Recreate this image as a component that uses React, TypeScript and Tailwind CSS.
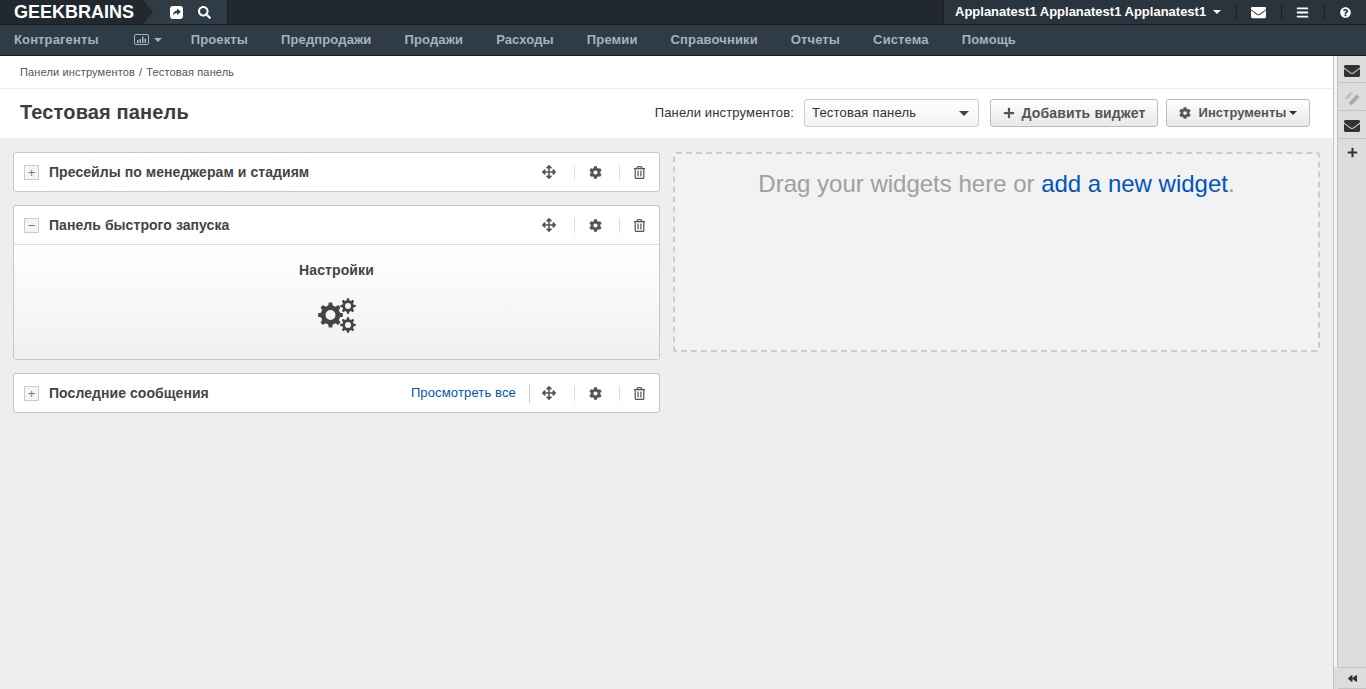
import React from 'react';
import {
  FaArrowsAlt,
  FaBackward,
  FaBars,
  FaCog,
  FaEnvelope,
  FaPlus,
  FaQuestionCircle,
  FaRegTrashAlt,
  FaSearch,
} from 'react-icons/fa';

const navItems = ['Проекты', 'Предпродажи', 'Продажи', 'Расходы', 'Премии', 'Справочники', 'Отчеты', 'Система', 'Помощь'];

// toothed wheel with a hole, used for the "Настройки" icon
const gearPath = (cx: number, cy: number, outer: number, inner: number, hole: number, teeth: number) => {
  const step = (Math.PI * 2) / teeth;
  const pt = (r: number, a: number) => `${(cx + r * Math.cos(a)).toFixed(2)} ${(cy + r * Math.sin(a)).toFixed(2)}`;
  let d = '';
  for (let i = 0; i < teeth; i++) {
    const a = i * step;
    d += `${i === 0 ? 'M' : 'L'}${pt(inner, a - step * 0.3)} L${pt(outer, a - step * 0.17)} L${pt(outer, a + step * 0.17)} L${pt(inner, a + step * 0.3)} `;
  }
  d += `Z M${cx - hole} ${cy} a${hole} ${hole} 0 1 0 ${hole * 2} 0 a${hole} ${hole} 0 1 0 ${-hole * 2} 0 Z`;
  return d;
};

const GearsIcon = () => (
  <svg width="38" height="35" viewBox="0 0 38 35" fill="#444" fillRule="evenodd">
    <path d={gearPath(12.5, 17, 12.5, 9.8, 5, 8)} />
    <path d={gearPath(30, 8, 7.8, 5.8, 3, 8)} />
    <path d={gearPath(30, 27, 7.8, 5.8, 3, 8)} />
  </svg>
);

const Caret: React.FC<{ className?: string }> = ({ className }) => (
  <span className={`inline-block w-0 h-0 border-x-[4px] border-x-transparent border-t-[4px] ${className ?? ''}`} />
);

const WidgetHeader: React.FC<{ title: string; open?: boolean; link?: boolean }> = ({ title, open, link }) => (
  <div className="h-[38px] flex items-center pl-[10px] pr-[13px]">
    <span className="w-[15px] h-[15px] border border-[#ccc] bg-[#f5f5f5] flex items-center justify-center text-[#777] text-[13px] leading-none">
      {open ? '−' : '+'}
    </span>
    <span className="ml-[10px] text-[14px] font-bold text-[#444] tracking-[0.06px]">{title}</span>
    <div className="ml-auto flex items-center text-[#555]">
      {link && (
        <>
          <span className="text-[13px] text-[#0055bb] mr-[13px] tracking-[0.14px]">Просмотреть все</span>
          <span className="w-px h-[19px] bg-[#ccc] mr-[12px]" />
        </>
      )}
      <FaArrowsAlt size={14} />
      <span className="w-px h-[15px] bg-[#ddd] ml-[18px] mr-[14px]" />
      <FaCog size={13} />
      <span className="w-px h-[15px] bg-[#ddd] ml-[17px] mr-[13px]" />
      <FaRegTrashAlt size={13} />
    </div>
  </div>
);

const SideItem: React.FC<{ children: React.ReactNode; className?: string }> = ({ children, className }) => (
  <div className={`flex items-center justify-center border-b border-[#c4c4c4] text-[#333] ${className ?? ''}`}>{children}</div>
);

export default function App() {
  return (
    <div className="h-[689px] w-[1366px] overflow-hidden flex flex-col bg-[#eee] font-['Liberation_Sans',Arial,sans-serif]">
      {/* top bar */}
      <div className="h-[25px] shrink-0 flex bg-[#22282f] border-b border-[#15191d]">
        <div className="relative w-[143px] flex items-center pl-[14px] text-white font-bold text-[18px]">
          GEEKBRAINS
          <span className="absolute left-full top-0 w-0 h-0 border-y-[12px] border-y-transparent border-l-[10px] border-l-[#22282f] z-10" />
        </div>
        <div className="w-[85px] bg-[#2f3b45] border-r border-[#1b2026] flex items-center text-white pl-[27px] gap-[15px]">
          <svg width="13" height="13" viewBox="0 0 13 13">
            <rect x="0" y="0" width="13" height="13" rx="3" fill="#fff" />
            <path d="M7 2.5 L11 5.8 L7 9 V7 C5 7 3.8 7.8 3 10 C2.8 6.5 4.5 4.6 7 4.5 Z" fill="#2f3b45" />
          </svg>
          <FaSearch size={13} />
        </div>
        <div className="ml-auto w-[423px] flex items-center bg-[#2a343d] border-l border-[#1b2026] text-white pl-[11px]">
          <span className="text-[13px] font-bold whitespace-nowrap">Applanatest1 Applanatest1 Applanatest1</span>
          <Caret className="border-t-white ml-[7px]" />
          <span className="w-px h-[16px] bg-[#1b2026] ml-[15px]" />
          <span className="w-[44px] pr-[2px] flex justify-center"><FaEnvelope size={15} /></span>
          <span className="w-px h-[16px] bg-[#1b2026]" />
          <span className="w-[42px] pr-px flex justify-center"><FaBars size={13} /></span>
          <span className="w-px h-[16px] bg-[#1b2026]" />
          <span className="w-[41px] flex justify-center"><FaQuestionCircle size={11} /></span>
        </div>
      </div>

      {/* nav */}
      <div className="h-[31px] shrink-0 flex items-center pl-[14px] pb-px bg-[#2f3b45] border-b border-[#15191d] text-[#a3b4bf] text-[13px] font-bold tracking-[0.13px]">
        <span>Контрагенты</span>
        <span className="flex items-center ml-[35px] mr-[29px]">
          <svg width="15" height="11" viewBox="0 0 15 11" fill="none">
            <rect x="0.5" y="0.5" width="14" height="10" rx="1.5" stroke="#a3b4bf" />
            <path d="M3 6h1.5v3H3zM5.5 5H7v4H5.5zM8 2.5h1.5V9H8zM10.5 4.5H12V9h-1.5z" fill="#a3b4bf" />
          </svg>
          <Caret className="border-t-[#a3b4bf] ml-[5px]" />
        </span>
        <div className="flex gap-[33px]">
          {navItems.map((item) => (
            <span key={item}>{item}</span>
          ))}
        </div>
      </div>

      <div className="flex-1 flex min-h-0">
        <div className="flex-1 flex flex-col min-w-0">
          {/* breadcrumb */}
          <div className="h-[33px] shrink-0 bg-white border-b border-[#eee] pl-[20px] flex items-center text-[11px] text-[#555] tracking-[0.15px]">
            Панели инструментов
            <span className="ml-[4px] mr-[4px]">/</span>
            Тестовая панель
          </div>
          {/* title */}
          <div className="h-[49px] shrink-0 bg-white flex items-center pl-[20px] pr-[23px]">
            <h1 className="text-[20px] font-bold text-[#3d3d3d] tracking-[0.14px] mb-[3px]">Тестовая панель</h1>
            <span className="ml-auto text-[13px] text-[#333] tracking-[0.15px] mb-px">Панели инструментов:</span>
            <div className="ml-[10px] w-[175px] h-[28px] mb-px border border-[#ccc] rounded-[3px] bg-gradient-to-b from-white to-[#f3f3f3] flex items-center pl-[7px] pr-[9px] text-[13px] text-[#333] tracking-[0.2px]">
              Тестовая панель
              <Caret className="ml-auto border-x-[5px] border-t-[5px] border-t-[#444]" />
            </div>
            <button className="ml-[11px] w-[168px] h-[28px] mb-px border border-[#bbb] rounded-[3px] bg-gradient-to-b from-white to-[#e8e8e8] flex items-center justify-center gap-[7px] text-[14px] font-bold text-[#555] tracking-[0.13px]">
              <FaPlus size={12} />
              Добавить виджет
            </button>
            <button className="ml-[8px] w-[144px] h-[28px] mb-px border border-[#bbb] rounded-[3px] bg-gradient-to-b from-white to-[#e8e8e8] flex items-center justify-center text-[13px] font-bold text-[#555]">
              <FaCog size={12} className="mr-[8px]" />
              Инструменты
              <Caret className="ml-[3px] border-t-[#333]" />
            </button>
          </div>

          {/* widgets */}
          <div className="flex-1 flex gap-[13px] pl-[13px] pr-[13px] pt-[14px]">
            <div className="w-[647px] flex flex-col gap-[13px]">
              <div className="bg-white border border-[#c6c6c6] rounded-[3px]">
                <WidgetHeader title="Пресейлы по менеджерам и стадиям" />
              </div>
              <div className="bg-white border border-[#c6c6c6] rounded-[3px]">
                <WidgetHeader title="Панель быстрого запуска" open />
                <div className="h-[115px] border-t border-[#ddd] bg-gradient-to-b from-white to-[#f0f0f0] flex flex-col items-center pt-[17px] text-[#444]">
                  <span className="text-[14px] font-bold leading-4 tracking-[0.1px]">Настройки</span>
                  <div className="mt-[20px]"><GearsIcon /></div>
                </div>
              </div>
              <div className="bg-white border border-[#c6c6c6] rounded-[3px]">
                <WidgetHeader title="Последние сообщения" link />
              </div>
            </div>
            <div className="flex-1 h-[200px] border-2 border-dashed border-[#ccc] rounded-[3px] bg-[#f2f2f2] pt-[14px] text-center text-[24px] leading-[32px] text-[#a0a0a0]">
              Drag your widgets here or <span className="text-[#0055bb]">add a new widget</span>.
            </div>
          </div>
        </div>

        {/* right rail */}
        <div className="w-[33px] shrink-0 flex bg-[#ddd] border-l border-[#c4c4c4]">
          <div className="w-[4px] bg-[#f5f5f5] border-r border-[#c4c4c4] h-[611px]" />
          <div className="flex-1 flex flex-col">
            <SideItem className="h-[27px] pt-[3px]"><FaEnvelope size={16} /></SideItem>
            <SideItem className="h-[28px] pt-[3px]">
              <svg width="16" height="16" viewBox="0 0 16 16" fill="#aaa">
                <path d="M0.5 8 L6.5 1.5 L9 3.5 L3 10 Z" fill="#c2c2c2" />
                <path d="M4.5 13 L12.5 4.5 L15.5 7 L7.5 15.5 Z" />
              </svg>
            </SideItem>
            <SideItem className="h-[28px] pt-[3px]"><FaEnvelope size={16} /></SideItem>
            <div className="h-[27px] flex items-center justify-center text-[#333]"><FaPlus size={11} /></div>
            <div className="flex-1" />
            <div className="h-[22px] border-y border-[#c4c4c4] flex items-center justify-center text-[#333]">
              <FaBackward size={9} />
            </div>
          </div>
        </div>
      </div>
    </div>
  );
}
